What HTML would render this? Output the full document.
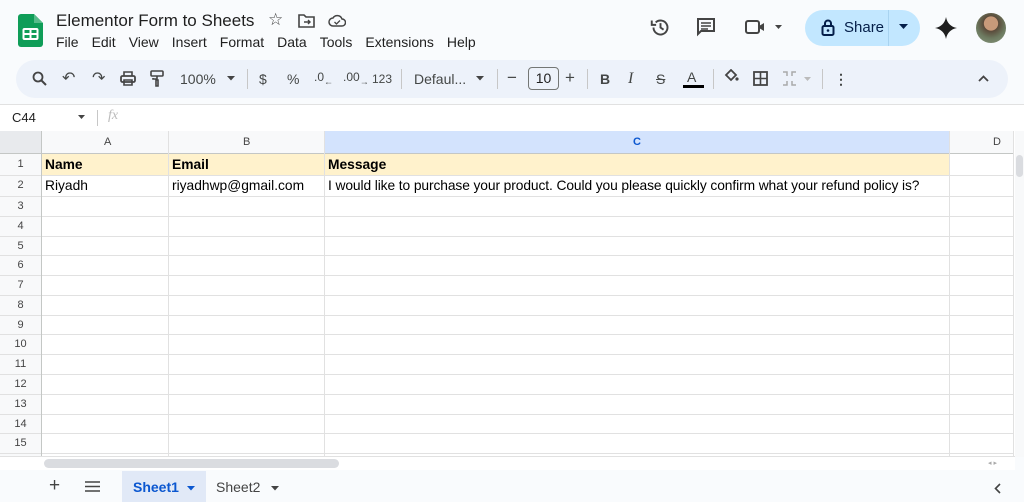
<!DOCTYPE html>
<html><head><meta charset="utf-8"><style>
*{box-sizing:border-box;margin:0;padding:0}
body{width:1024px;height:502px;overflow:hidden;background:#f9fbfd;font-family:"Liberation Sans",Arial,sans-serif;position:relative;color:#1f1f1f}
.a{position:absolute}
.menu span{margin-right:13px}
.tb{position:absolute;top:60px;left:16px;width:992px;height:38px;background:#edf2fa;border-radius:19px}
.ti{position:absolute;top:0;line-height:38px;font-size:14px;color:#444746}
.grid{position:absolute;left:0;top:131px;width:1015px;height:326px;background:#fff;overflow:hidden}
.hl{position:absolute;left:0;width:1013px;height:1px;background:#e1e1e1}
.vl{position:absolute;top:0;width:1px;height:326px;background:#e1e1e1}
.rn{position:absolute;left:0;width:41px;text-align:center;font-size:11px;color:#444;background:#f8f9fa}
.c{position:absolute;font-size:13.8px;line-height:21px;color:#000}
</style></head><body>
<div class="a" style="left:0;top:0;width:1024px;height:60px;background:#f9fbfd"></div>
<svg class="a" style="left:18px;top:14px" width="25" height="33" viewBox="0 0 25 33"><path d="M3 0h13l9 9v21a3 3 0 0 1-3 3H3a3 3 0 0 1-3-3V3a3 3 0 0 1 3-3z" fill="#0f9d58"/><path d="M16 0v9h9z" fill="#57bb8a"/><rect x="5.5" y="15" width="14" height="10" rx="1" fill="none" stroke="#fff" stroke-width="2"/><path d="M5.5 20h14M12.5 15v10" stroke="#fff" stroke-width="2"/></svg>
<div class="a" style="left:56px;top:11px;font-size:17px;color:#1f1f1f">Elementor Form to Sheets</div>
<div class="a" style="left:268px;top:10px;font-size:17px;color:#444">☆</div>
<svg class="a" style="left:298px;top:14px" width="17" height="14" viewBox="0 0 17 14"><path d="M1 1h5l2 2h8v10H1z" fill="none" stroke="#444" stroke-width="1.6"/><path d="M6 8h6M10 6l2 2-2 2" fill="none" stroke="#444" stroke-width="1.4"/></svg>
<svg class="a" style="left:328px;top:14px" width="18" height="13" viewBox="0 0 18 13"><path d="M5 12a4 4 0 0 1 0-8 5 5 0 0 1 9 1 3.5 3.5 0 0 1 0 7z" fill="none" stroke="#444" stroke-width="1.5"/><path d="M6.5 8l2 2 3.5-3.5" fill="none" stroke="#444" stroke-width="1.3"/></svg>
<div class="a menu" style="left:56px;top:34px;font-size:14px;color:#1f1f1f"><span>File</span><span>Edit</span><span>View</span><span>Insert</span><span>Format</span><span>Data</span><span>Tools</span><span>Extensions</span><span>Help</span></div>
<svg class="a" style="left:650px;top:17px" width="21" height="21" viewBox="0 0 24 24"><path d="M4 12a8 8 0 1 0 2.5-5.8" fill="none" stroke="#444" stroke-width="2.2"/><path d="M2 4v5h5" fill="none" stroke="#444" stroke-width="2.2"/><path d="M12 7v5l3.5 2.5" fill="none" stroke="#444" stroke-width="2.2"/></svg>
<svg class="a" style="left:696px;top:17px" width="20" height="20" viewBox="0 0 20 20"><path d="M2 2h16v12H5l-3 3z" fill="none" stroke="#444" stroke-width="2"/><path d="M5 6h10M5 9h10M5 12h7" stroke="#444" stroke-width="1.5"/></svg>
<svg class="a" style="left:745px;top:19px" width="40" height="16" viewBox="0 0 40 16"><rect x="1" y="2" width="13" height="12" rx="2" fill="none" stroke="#444" stroke-width="2"/><path d="M14 7l5-3v8l-5-3z" fill="#444"/><path d="M30 6h7l-3.5 4z" fill="#444"/></svg>
<div class="a" style="left:805px;top:10px;width:115px;height:36px;border-radius:18px;background:#c2e7ff"></div>
<div class="a" style="left:888px;top:10px;width:1px;height:36px;background:#a8d3f0"></div>
<svg class="a" style="left:821px;top:19px" width="14" height="17" viewBox="0 0 14 17"><rect x="1.5" y="7" width="11" height="9" rx="1.5" fill="none" stroke="#041e49" stroke-width="2"/><path d="M4 7V4.5a3 3 0 0 1 6 0V7" fill="none" stroke="#041e49" stroke-width="2"/><circle cx="7" cy="11.5" r="1.3" fill="#041e49"/></svg>
<div class="a" style="left:844px;top:19px;font-size:15px;color:#041e49">Share</div>
<svg class="a" style="left:899px;top:24px" width="10" height="6"><path d="M0 0h9l-4.5 5z" fill="#041e49"/></svg>
<svg class="a" style="left:935px;top:17px" width="22" height="22" viewBox="0 0 22 22"><path d="M11 0C12 6 16 10 22 11 16 12 12 16 11 22 10 16 6 12 0 11 6 10 10 6 11 0z" fill="#1f1f1f"/></svg>
<div class="a" style="left:976px;top:13px;width:30px;height:30px;border-radius:50%;background:radial-gradient(circle at 50% 35%,#c89a7a 0 28%,#5a4a3a 30%,#6d7a60 60%,#8a9a80)"></div>
<div class="tb"></div>
<svg class="a" style="left:32px;top:71px" width="15" height="15" viewBox="0 0 15 15"><circle cx="6" cy="6" r="4.5" fill="none" stroke="#444" stroke-width="1.8"/><path d="M9.5 9.5l4.5 4.5" stroke="#444" stroke-width="2"/></svg>
<div class="ti" style="left:62px;top:60px;font-size:16px">↶</div>
<div class="ti" style="left:92px;top:60px;font-size:16px">↷</div>
<svg class="a" style="left:120px;top:71px" width="16" height="15" viewBox="0 0 16 15"><rect x="1" y="5" width="14" height="6" rx="1.5" fill="none" stroke="#444" stroke-width="1.8"/><path d="M4 5V1h8v4M4 9h8v5H4z" fill="none" stroke="#444" stroke-width="1.6"/></svg>
<svg class="a" style="left:150px;top:70px" width="14" height="17" viewBox="0 0 14 17"><rect x="1" y="1" width="12" height="5" rx="1" fill="none" stroke="#444" stroke-width="1.6"/><path d="M7 6v3H3v-1M6 10h2v6H6z" fill="none" stroke="#444" stroke-width="1.6"/></svg>
<div class="ti" style="left:180px;top:60px">100%</div>
<svg class="a" style="left:227px;top:76px" width="9" height="5"><path d="M0 0h8l-4 4.5z" fill="#444"/></svg>
<div class="a" style="left:247px;top:69px;width:1px;height:20px;background:#c7c7c7"></div>
<div class="ti" style="left:259px;top:60px">$</div>
<div class="ti" style="left:287px;top:60px">%</div>
<div class="ti" style="left:314px;top:58px;font-size:12px">.0<sub style="font-size:9px">←</sub></div>
<div class="ti" style="left:343px;top:58px;font-size:12px">.00<sub style="font-size:9px">→</sub></div>
<div class="ti" style="left:372px;top:60px;font-size:12px">123</div>
<div class="a" style="left:401px;top:69px;width:1px;height:20px;background:#c7c7c7"></div>
<div class="ti" style="left:414px;top:60px">Defaul...</div>
<svg class="a" style="left:476px;top:76px" width="9" height="5"><path d="M0 0h8l-4 4.5z" fill="#444"/></svg>
<div class="a" style="left:497px;top:69px;width:1px;height:20px;background:#c7c7c7"></div>
<div class="ti" style="left:507px;top:59px;font-size:17px">−</div>
<div class="a" style="left:528px;top:67px;width:31px;height:23px;border:1px solid #747775;border-radius:4px;font-size:14px;text-align:center;line-height:21px;color:#1f1f1f">10</div>
<div class="ti" style="left:565px;top:59px;font-size:17px">+</div>
<div class="a" style="left:587px;top:69px;width:1px;height:20px;background:#c7c7c7"></div>
<div class="ti" style="left:600px;top:60px;font-weight:bold">B</div>
<div class="ti" style="left:628px;top:60px;font-style:italic;font-family:'Liberation Serif',serif;font-size:16px">I</div>
<div class="ti" style="left:656px;top:60px;text-decoration:line-through">S</div>
<div class="ti" style="left:687px;top:58px">A</div>
<div class="a" style="left:683px;top:85px;width:21px;height:3px;background:#000"></div>
<div class="a" style="left:713px;top:69px;width:1px;height:20px;background:#c7c7c7"></div>
<svg class="a" style="left:723px;top:69px" width="16" height="14" viewBox="0 0 16 14"><path d="M3 6l5-5 5 5-5 5z" fill="none" stroke="#444" stroke-width="1.8"/><circle cx="14" cy="10" r="1.6" fill="#444"/></svg>
<svg class="a" style="left:753px;top:71px" width="15" height="15" viewBox="0 0 15 15"><rect x="1" y="1" width="13" height="13" fill="none" stroke="#444" stroke-width="1.8"/><path d="M7.5 1v13M1 7.5h13" stroke="#444" stroke-width="1.6"/></svg>
<svg class="a" style="left:782px;top:71px" width="32" height="15" viewBox="0 0 32 15"><path d="M1 1h4v4M1 14h4v-4M14 1h-4v4M14 14h-4v-4" fill="none" stroke="#aaa" stroke-width="1.5"/><path d="M22 6h7l-3.5 4z" fill="#bbb"/></svg>
<div class="a" style="left:822px;top:69px;width:1px;height:20px;background:#c7c7c7"></div>
<div class="ti" style="left:834px;top:60px;font-weight:bold">⋮</div>
<svg class="a" style="left:978px;top:75px" width="11" height="7"><path d="M1 6l4.5-4.5L10 6" fill="none" stroke="#444" stroke-width="1.8"/></svg>
<div class="a" style="left:0;top:104px;width:1024px;height:27px;background:#fff;border-top:1px solid #e1e1e1"></div>
<div class="a" style="left:12px;top:110px;font-size:13px;color:#1f1f1f">C44</div>
<svg class="a" style="left:78px;top:115px" width="8" height="5"><path d="M0 0h7l-3.5 4z" fill="#444"/></svg>
<div class="a" style="left:97px;top:110px;width:1px;height:16px;background:#c7c7c7"></div>
<div class="a" style="left:108px;top:108px;font-size:14px;font-style:italic;color:#bbb;font-family:'Liberation Serif',serif">fx</div>
<div class="grid">
<div class="a" style="left:0;top:0;width:1013px;height:22px;background:#f8f9fa"></div>
<div class="a" style="left:324px;top:0;width:625px;height:22px;background:#d3e3fd"></div>
<div class="a" style="left:0;top:0;width:41px;height:326px;background:#f8f9fa"></div>
<div class="a" style="left:0;top:0;width:41px;height:22px;background:#e8eaed"></div>
<div class="a" style="left:41px;top:22px;width:908px;height:22px;background:#fff2cc"></div>
<div class="a" style="left:104px;top:5px;font-size:11px;color:#444">A</div>
<div class="a" style="left:243px;top:5px;font-size:11px;color:#444">B</div>
<div class="a" style="left:633px;top:5px;font-size:11px;color:#0b57d0;font-weight:bold">C</div>
<div class="a" style="left:993px;top:5px;font-size:11px;color:#444">D</div>
<div class="hl" style="top:22px;background:#c4c7c5"></div>
<div class="hl" style="top:44px"></div><div class="hl" style="top:65px"></div>
<div class="hl" style="top:85px"></div><div class="hl" style="top:105px"></div><div class="hl" style="top:124px"></div><div class="hl" style="top:144px"></div><div class="hl" style="top:164px"></div><div class="hl" style="top:184px"></div><div class="hl" style="top:203px"></div><div class="hl" style="top:223px"></div><div class="hl" style="top:243px"></div><div class="hl" style="top:263px"></div><div class="hl" style="top:283px"></div><div class="hl" style="top:302px"></div><div class="hl" style="top:322px"></div>
<div class="vl" style="left:41px;background:#c4c7c5"></div><div class="vl" style="left:168px"></div><div class="vl" style="left:324px"></div><div class="vl" style="left:949px"></div><div class="vl" style="left:1013px"></div>
<div class="rn" style="top:27px">1</div><div class="rn" style="top:48px">2</div><div class="rn" style="top:69px">3</div><div class="rn" style="top:89px">4</div><div class="rn" style="top:109px">5</div><div class="rn" style="top:128px">6</div><div class="rn" style="top:148px">7</div><div class="rn" style="top:168px">8</div><div class="rn" style="top:188px">9</div><div class="rn" style="top:207px">10</div><div class="rn" style="top:227px">11</div><div class="rn" style="top:247px">12</div><div class="rn" style="top:267px">13</div><div class="rn" style="top:287px">14</div><div class="rn" style="top:306px">15</div>
<div class="c" style="left:45px;top:23px;font-weight:bold">Name</div>
<div class="c" style="left:172px;top:23px;font-weight:bold">Email</div>
<div class="c" style="left:328px;top:23px;font-weight:bold">Message</div>
<div class="c" style="left:45px;top:44px">Riyadh</div>
<div class="c" style="left:172px;top:44px">riyadhwp@gmail.com</div>
<div class="c" style="left:328px;top:44px;letter-spacing:-0.1px">I would like to purchase your product. Could you please quickly confirm what your refund policy is?</div>
</div>
<div class="a" style="left:1015px;top:131px;width:9px;height:326px;background:#f8f9fa"></div>
<div class="a" style="left:1016px;top:155px;width:7px;height:22px;border-radius:4px;background:#dadce0"></div>
<div class="a" style="left:0;top:456px;width:1015px;height:14px;background:#fff;border-top:1px solid #e1e1e1"></div>
<div class="a" style="left:44px;top:459px;width:295px;height:9px;border-radius:5px;background:#dadce0"></div>
<div class="a" style="left:988px;top:459px;font-size:7px;color:#aaa">◂ ▸</div>
<div class="a" style="left:0;top:470px;width:1024px;height:32px;background:#f9fbfd"></div>
<div class="a" style="left:49px;top:475px;font-size:19px;color:#444">+</div>
<svg class="a" style="left:85px;top:481px" width="15" height="11"><path d="M0 1h15M0 5.5h15M0 10h15" stroke="#444" stroke-width="1.6"/></svg>
<div class="a" style="left:122px;top:471px;width:84px;height:31px;background:#e1e9f7"></div>
<div class="a" style="left:133px;top:479px;font-size:14px;color:#0b57d0;font-weight:bold">Sheet1</div>
<svg class="a" style="left:187px;top:486px" width="9" height="5"><path d="M0 0h8l-4 4.5z" fill="#0b57d0"/></svg>
<div class="a" style="left:216px;top:479px;font-size:14px;color:#444">Sheet2</div>
<svg class="a" style="left:271px;top:486px" width="9" height="5"><path d="M0 0h8l-4 4.5z" fill="#444"/></svg>
<svg class="a" style="left:994px;top:483px" width="7" height="11"><path d="M6 1L1.5 5.5 6 10" fill="none" stroke="#444" stroke-width="1.6"/></svg>
</body></html>
